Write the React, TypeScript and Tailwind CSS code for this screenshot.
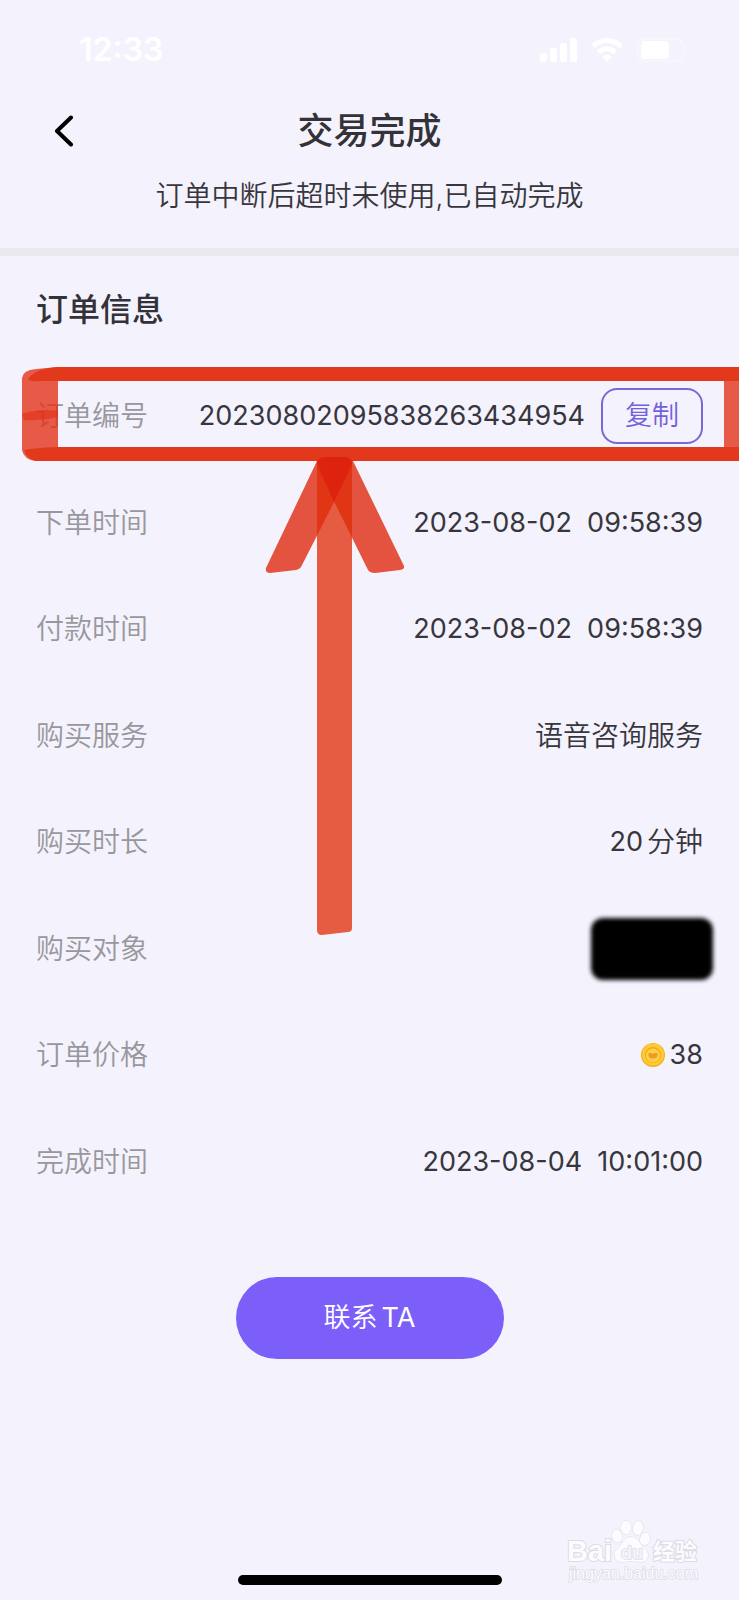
import type { ReactNode } from 'react';

function StatusBar() {
  return (
    <div className="flex h-24 items-center justify-between pt-1 pr-[52px] pl-[79px] text-white">
      <span className="text-[32px] leading-10 font-semibold">12:33</span>
      <div className="flex items-center gap-3">
        <svg className="h-7 w-10" viewBox="0 0 40 28" fill="currentColor" aria-hidden="true">
          <rect x="1" y="17" width="7" height="9" rx="2" />
          <rect x="11" y="12" width="7" height="14" rx="2" />
          <rect x="21" y="7" width="7" height="19" rx="2" />
          <rect x="31" y="2" width="7" height="24" rx="2" />
        </svg>
        <svg className="h-7 w-8" viewBox="0 0 32 28" fill="none" stroke="currentColor" strokeWidth="5" aria-hidden="true">
          <path d="M2 10.500C10 2.500 22 2.500 30 10.500" />
          <path d="M7.500 16.500C12.500 11.500 19.500 11.500 24.500 16.500" />
          <path d="M16 25.500L11 20.500C14 18 18 18 21 20.500Z" fill="currentColor" stroke="none" />
        </svg>
        <svg className="h-7 w-[52px]" viewBox="0 0 52 28" fill="none" aria-hidden="true">
          <rect x="3" y="3" width="45" height="22" rx="7" stroke="white" strokeOpacity="0.350" strokeWidth="2" />
          <rect x="6" y="5" width="28" height="18" rx="4" fill="white" />
          <path d="M50 10v8c2-1 3-2 3-4s-1-3-3-4Z" fill="white" fillOpacity="0.350" />
        </svg>
      </div>
    </div>
  );
}

function Row({ label, children }: { label: string; children: ReactNode }) {
  return (
    <div className="flex items-center justify-between">
      <dt className="text-[28px] font-[350] text-[#98979d]">{label}</dt>
      <dd className="flex items-center whitespace-pre text-[#37363d]">{children}</dd>
    </div>
  );
}

function Coin() {
  return (
    <svg className="mr-[5px] h-6 w-6" viewBox="0 0 24 24" aria-hidden="true">
      <circle cx="12" cy="12" r="12" fill="#f3b01c" />
      <circle cx="12" cy="11.500" r="11" fill="#fdca35" />
      <circle cx="12" cy="12" r="8" fill="#f0ab1c" />
      <circle cx="12" cy="12.500" r="7" fill="#ffd045" />
      <path d="M7.500 10h3l1.500 1 1.500-1h3v2.500c0 2-2 3-4.500 3s-4.500-1-4.500-3Z" fill="#f09a20" />
    </svg>
  );
}

function Marker() {
  return (
    <svg
      className="pointer-events-none absolute top-0 left-0 h-[960px] w-[739px]"
      viewBox="0 0 739 960"
      aria-hidden="true"
    >
      <defs>
        <filter id="soft" x="-5%" y="-5%" width="110%" height="110%">
          <feGaussianBlur stdDeviation="0.700" />
        </filter>
      </defs>
      <g filter="url(#soft)">
        <g fill="#e23216">
          <path d="M22 378Q23 370 36 369L58 367H742V381H58V447H742V461H36Q24 460 22 450Z" fillOpacity="0.800" />
          <path d="M28 379Q36 368 58 367H742V381H38Q30 382 28 379Z" fillOpacity="0.850" />
          <path d="M24 450Q34 448 58 447H742V461H36Q27 459 24 450Z" fillOpacity="0.850" />
          <path d="M22 414Q40 408 58 411V417Q40 421 24 420Z" fillOpacity="0.600" />
          <rect x="724" y="381" width="18" height="66" fillOpacity="0.800" />
        </g>
        <path d="M317 461Q318 458 322 458H348Q352 458 352 461V928Q352 932 348 932L322 935Q317 935 317 930Z" fill="#e23a1c" fillOpacity="0.820" />
        <path d="M317 461Q320 457 325 457H346Q353 458 352 467L301 567Q300 569 296 570L270 573Q265 573 266 568Z" fill="#e02c0c" fillOpacity="0.800" />
        <path d="M317 467Q316 458 323 458H348Q352 458 354 463L404 566Q405 569 400 570L375 573Q370 573 368 570Z" fill="#e02c0c" fillOpacity="0.800" />
        <path d="M317 462Q320 457 326 457H345Q351 458 352 463L334 502Z" fill="#da1c0c" fillOpacity="0.600" />
      </g>
    </svg>
  );
}

function Watermark() {
  return (
    <svg
      className="pointer-events-none absolute right-[38px] bottom-4 h-16 w-[134px]"
      viewBox="0 0 134 64"
      fill="#fcfbff"
      stroke="#dddbe4"
      aria-label="Baidu经验"
    >
      <g fontFamily="Liberation Sans, Noto Sans CJK SC, sans-serif" fontWeight="700" paintOrder="stroke" strokeWidth="2">
        <text x="0" y="41" fontSize="29">Bai</text>
        <g strokeWidth="1">
          <ellipse cx="50" cy="16" rx="5" ry="6.500" transform="rotate(-12 50 16)" />
          <ellipse cx="59" cy="7.500" rx="5" ry="7" />
          <ellipse cx="71" cy="8" rx="5" ry="7" transform="rotate(8 71 8)" />
          <ellipse cx="78" cy="19" rx="5" ry="6.500" transform="rotate(15 78 19)" />
          <path d="M64 17C57 17 55 25 50 29C45 33 47 42 55 42C59 42 61 41 64 41S70 42 74 42C82 42 83 33 78 29C73 25 72 17 64 17Z" />
        </g>
        <text x="54" y="39" fontSize="18" fill="#f4f2fc" strokeWidth="1.500">du</text>
        <text x="86" y="39" fontSize="22">经验</text>
      </g>
      <text x="2" y="59" fontSize="16" fontFamily="Liberation Sans, sans-serif" fill="#fcfbff" stroke="#dddbe4" paintOrder="stroke" strokeWidth="1.500">
        jingyan.baidu.com
      </text>
    </svg>
  );
}

export default function App() {
  return (
    <div className="relative flex min-h-screen flex-col overflow-hidden bg-[#f4f2fc] font-['Inter','Noto_Sans_CJK_SC',sans-serif] text-[27px] leading-10 text-[#37363d]">
      <StatusBar />
      <header className="border-b-8 border-[#ebe9f0] pb-8">
        <div className="grid h-[70px] grid-cols-[56px_1fr_56px] items-center px-9">
          <button type="button" aria-label="返回" className="flex h-14 w-14 items-center justify-center">
            <svg className="h-8 w-5" viewBox="0 0 20 32" fill="none" stroke="black" strokeWidth="4" strokeLinecap="round" strokeLinejoin="round" aria-hidden="true">
              <path d="M17 2.500L3 16L17 29.500" />
            </svg>
          </button>
          <h1 className="text-center text-[36px] leading-[52px] font-medium text-[#333238]">交易完成</h1>
        </div>
        <p className="pt-[10px] text-center text-[28px] leading-10 font-[350]">订单中断后超时未使用,已自动完成</p>
      </header>

      <main className="flex flex-col px-9">
        <h2 className="pt-8 pb-1 text-[32px] leading-[44px] font-medium text-[#333238]">订单信息</h2>
        <dl className="mt-[27px] grid min-h-[852px] auto-rows-fr">
          <Row label="订单编号">
            20230802095838263434954
            <button type="button" className="ml-4 h-14 w-[102px] rounded-2xl border-2 border-[#7968d3] font-[350] text-[#7460dc]">
              复制
            </button>
          </Row>
          <Row label="下单时间">{'2023-08-02  09:58:39'}</Row>
          <Row label="付款时间">{'2023-08-02  09:58:39'}</Row>
          <Row label="购买服务">
            <span className="text-[28px] font-[350]">语音咨询服务</span>
          </Row>
          <Row label="购买时长">
            20<span className="ml-1 text-[28px] font-[350]">分钟</span>
          </Row>
          <Row label="购买对象">
            <span className="-mr-[10px] block h-[62px] w-[122px] rounded-xl bg-black blur-[2px]" />
          </Row>
          <Row label="订单价格">
            <Coin />
            38
          </Row>
          <Row label="完成时间">{'2023-08-04  10:01:00'}</Row>
        </dl>
        <button
          type="button"
          className="mt-[62px] flex h-[82px] w-[268px] items-center justify-center gap-1 self-center rounded-full bg-[#7c5ff8] text-white"
        >
          <span className="font-[350]">联系</span>
          <span>TA</span>
        </button>
      </main>

      <div className="mx-auto mt-auto mb-[15px] h-[10px] w-[264px] rounded-full bg-black" />
      <Marker />
      <Watermark />
    </div>
  );
}
